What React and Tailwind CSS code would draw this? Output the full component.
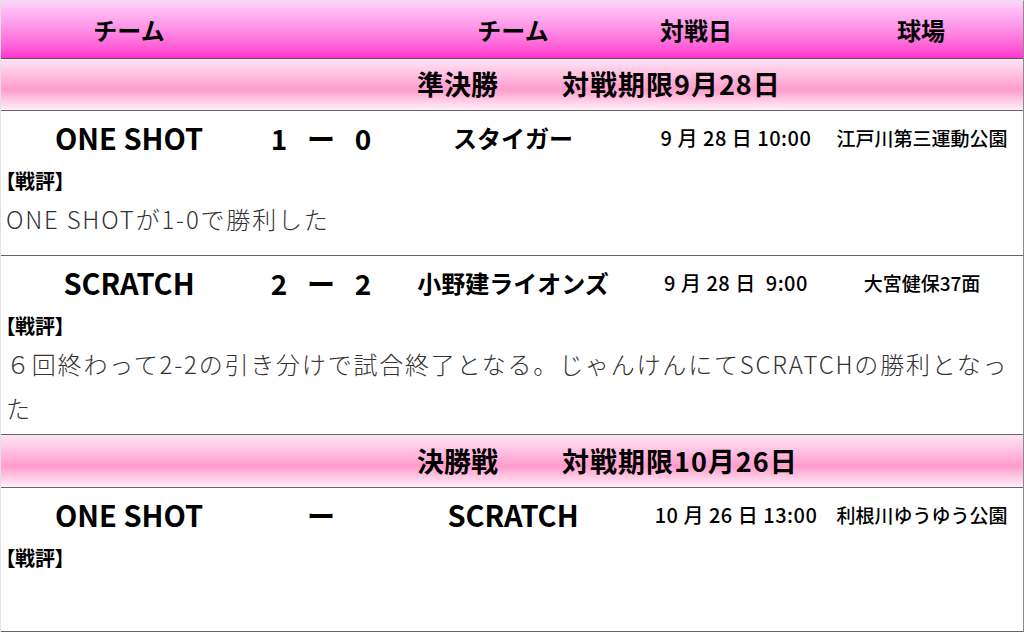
import React from 'react';

const rounds = [
    {
        title: "準決勝",
        limit: "対戦期限9月28日",
        games: [
            {
                home: "ONE SHOT", homeLatin: true,
                score: ["1", "ー", "0"],
                away: "スタイガー", awayLatin: false,
                date: "9 月 28 日 10:00",
                place: "江戸川第三運動公園",
                comment: ["ONE SHOTが1-0で勝利した"],
                height: "h-[145px]",
            },
            {
                home: "SCRATCH", homeLatin: true,
                score: ["2", "ー", "2"],
                away: "小野建ライオンズ", awayLatin: false,
                date: "9 月 28 日  9:00",
                place: "大宮健保37面",
                comment: ["６回終わって2-2の引き分けで試合終了となる。じゃんけんにてSCRATCHの勝利となっ", "た"],
                height: "h-[179px]",
            },
        ],
        bandHeight: "h-[52px]",
    },
    {
        title: "決勝戦",
        limit: "対戦期限10月26日",
        games: [
            {
                home: "ONE SHOT", homeLatin: true,
                score: ["", "ー", ""],
                away: "SCRATCH", awayLatin: true,
                date: "10 月 26 日 13:00",
                place: "利根川ゆうゆう公園",
                comment: [],
                height: "h-[144px]",
            },
        ],
        bandHeight: "h-[53px]",
    },
];

const TeamName = ({ name, latin }) => (
    <div className={`text-center whitespace-nowrap ${latin ? "text-[29px] font-semibold" : "text-[24px] font-bold"}`}>
        {name}
    </div>
);

const GameRow = ({ game }) => (
    <div className={`${game.height} border-b border-[#666] bg-white`}>
        <div className="grid grid-cols-[256px_128px_256px_190px_182px] h-[54px] items-center">
            <TeamName name={game.home} latin={game.homeLatin} />
            <div className="flex justify-center text-[28px] font-semibold">
                {game.score.map((s, i) => (
                    <span key={i} className="w-[42px] text-center">{s}</span>
                ))}
            </div>
            <TeamName name={game.away} latin={game.awayLatin} />
            <div className="text-center text-[20px] font-medium tracking-[0.5px] whitespace-pre">{game.date}</div>
            <div className="text-center text-[19px] font-medium whitespace-nowrap">{game.place}</div>
        </div>
        <div className="h-[32px] flex items-center pl-[4px] text-[20px] font-bold [font-feature-settings:'palt']">
            【戦評】
        </div>
        <div className="pl-[5px] text-[24px] leading-[44px] tracking-[1.8px] font-light text-[#333]">
            {game.comment.map((line, i) => (
                <div key={i} className="whitespace-nowrap">{line}</div>
            ))}
        </div>
    </div>
);

export default function App() {
    return (
        <div className="w-[1024px] h-[632px] bg-white text-black font-['Noto_Sans_CJK_JP','Noto_Sans',sans-serif] overflow-hidden">
            <div className="border-t border-l border-r border-t-[#e2e2e2] border-l-[#e2e2e2] border-r-[#8a8a8a]">
                {/* header */}
                <div className="h-[58px] border-b border-[#555] bg-linear-to-b from-[#ffd2fb] to-[#ff30cf] grid grid-cols-[256px_128px_256px_110px_1fr] items-center text-[24px] font-bold">
                    <div className="text-center">チーム</div>
                    <div></div>
                    <div className="text-center">チーム</div>
                    <div className="text-center">対戦日</div>
                    <div className="text-center pl-[68px]">球場</div>
                </div>
                {rounds.map((round, r) => (
                    <div key={r}>
                        <div className={`${round.bandHeight} border-b border-[#666] bg-linear-to-b from-[#ffe4f6] via-[#ff9dcd] via-60% to-[#fff0fb] flex items-center pl-[416px] gap-[64px] text-[27px] font-bold whitespace-nowrap`}>
                            <span>{round.title}</span>
                            <span className="tracking-[1px]">{round.limit}</span>
                        </div>
                        {round.games.map((g, i) => (
                            <GameRow key={i} game={g} />
                        ))}
                    </div>
                ))}
            </div>
        </div>
    );
}
